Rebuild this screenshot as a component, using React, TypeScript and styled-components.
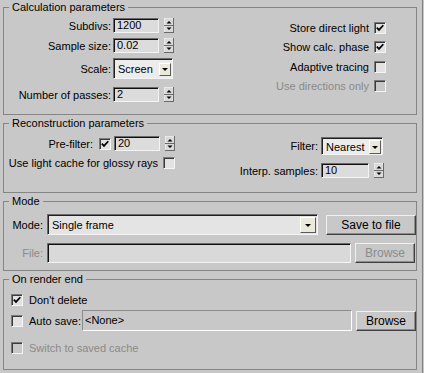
import React from "react";
import styled, { createGlobalStyle } from "styled-components";

const GlobalStyle = createGlobalStyle`
  html, body { margin: 0; padding: 0; background: #c8c8c8; }
  body {
    font-family: "Liberation Sans", Arial, sans-serif;
    font-size: 11px;
    color: #000;
  }
`;

const Panel = styled.div`
  box-sizing: border-box;
  width: 423px;
  height: 373px;
  padding: 1px 0 0 3px;
  border-right: 1px solid #808080;
  display: flex;
  flex-direction: column;
  gap: 2px;
  background: #c8c8c8;
`;

const Group = styled.fieldset<{ $h: number }>`
  box-sizing: border-box;
  width: 414px;
  height: ${(p) => p.$h}px;
  margin: 0;
  padding: 0;
  min-width: 0;
  border: 1px solid #858585;
`;

const Legend = styled.legend`
  margin-left: 5px;
  padding: 0 3px;
  line-height: 13px;
  font-size: 11px;
`;

const Split = styled.div`
  display: flex;
  justify-content: space-between;
  align-items: flex-start;
`;

const Col = styled.div<{ $pt: number; $pr?: number; $w?: number; $end?: boolean }>`
  display: flex;
  flex-direction: column;
  align-items: ${(p) => (p.$end ? "flex-end" : "stretch")};
  padding-top: ${(p) => p.$pt}px;
  padding-right: ${(p) => p.$pr ?? 0}px;
  ${(p) => (p.$w ? `width: ${p.$w}px;` : "")}
`;

const Row = styled.div<{ $h: number; $mt?: number; $gap?: number; $pl?: number }>`
  display: flex;
  align-items: center;
  height: ${(p) => p.$h}px;
  margin-top: ${(p) => p.$mt ?? 0}px;
  padding-left: ${(p) => p.$pl ?? 0}px;
  gap: ${(p) => p.$gap ?? 0}px;
`;

const Label = styled.span<{ $w?: number; $off?: boolean; $mr?: number; $ml?: number; $left?: boolean }>`
  ${(p) => (p.$w ? `width: ${p.$w}px;` : "")}
  text-align: ${(p) => (p.$left ? "left" : "right")};
  margin-right: ${(p) => p.$mr ?? 0}px;
  margin-left: ${(p) => p.$ml ?? 0}px;
  color: ${(p) => (p.$off ? "#8a8a8a" : "#000")};
  white-space: nowrap;
  flex-shrink: 0;
`;

const Field = styled.div<{ $w: number; $h?: number }>`
  box-sizing: border-box;
  width: ${(p) => p.$w}px;
  height: ${(p) => p.$h ?? 15}px;
  background: #dcdcdc;
  border: 1px solid;
  border-color: #6a6a6a #f4f4f4 #f4f4f4 #6a6a6a;
  box-shadow: inset 1px 1px #101010;
  padding-left: 3px;
  line-height: ${(p) => (p.$h ?? 15) - 2}px;
  flex-shrink: 0;
`;

const FileBox = styled.div<{ $w: number; $h: number; $static?: boolean }>`
  box-sizing: border-box;
  width: ${(p) => p.$w}px;
  height: ${(p) => p.$h}px;
  background: ${(p) => (p.$static ? "#c8c8c8" : "#d9d9d9")};
  border: 1px solid;
  border-color: ${(p) =>
    p.$static ? "#8c8c8c #ffffff #ffffff #8c8c8c" : "#6a6a6a #f4f4f4 #f4f4f4 #6a6a6a"};
  box-shadow: ${(p) => (p.$static ? "none" : "inset 1px 1px #101010")};
  padding-left: 2px;
  line-height: ${(p) => p.$h - 2}px;
  flex-shrink: 0;
`;

const SpinBox = styled.svg`
  flex-shrink: 0;
  display: block;
`;

const Select = styled.div<{ $w: number; $h: number; $bg: string }>`
  box-sizing: border-box;
  width: ${(p) => p.$w}px;
  height: ${(p) => p.$h}px;
  display: flex;
  align-items: center;
  justify-content: space-between;
  background: ${(p) => p.$bg};
  border: 1px solid;
  border-color: #6a6a6a #f4f4f4 #f4f4f4 #6a6a6a;
  box-shadow: inset 1px 1px #202020;
  padding: 1px 1px 0 4px;
  flex-shrink: 0;
`;

const ArrowBtn = styled.span<{ $w: number; $h: number }>`
  box-sizing: border-box;
  width: ${(p) => p.$w}px;
  height: ${(p) => p.$h}px;
  display: flex;
  align-items: center;
  justify-content: center;
  background: #ebe8dc;
  border: 1px solid;
  border-color: #ffffff #5a5a5a #5a5a5a #ffffff;
  &::after {
    content: "";
    border-left: 3px solid transparent;
    border-right: 3px solid transparent;
    border-top: 3px solid #000;
    margin-top: 1px;
  }
`;

const Button = styled.div<{ $w: number; $h: number; $off?: boolean }>`
  box-sizing: border-box;
  width: ${(p) => p.$w}px;
  height: ${(p) => p.$h}px;
  display: flex;
  align-items: center;
  justify-content: center;
  background: #c8c8c8;
  border: 1px solid;
  border-color: #f0f0f0 #404040 #404040 #f0f0f0;
  box-shadow: inset -1px -1px #8c8c8c;
  color: ${(p) => (p.$off ? "#8c8c8c" : "#000")};
  font-size: 12px;
  flex-shrink: 0;
`;

const Box = styled.span<{ $off?: boolean }>`
  box-sizing: border-box;
  width: 12px;
  height: 12px;
  display: flex;
  align-items: center;
  justify-content: center;
  background: ${(p) => (p.$off ? "#c8c8c8" : "#e2e2e2")};
  border: 1px solid;
  border-color: #7a7a7a #f4f4f4 #f4f4f4 #7a7a7a;
  box-shadow: inset 1px 1px #3a3a3a;
  flex-shrink: 0;
`;

const CheckGrid = styled.div`
  display: grid;
  grid-template-columns: auto 12px;
  grid-auto-rows: 13px;
  row-gap: 6.5px;
  column-gap: 5px;
  align-items: center;
  justify-items: end;
`;

const FormGrid = styled.div`
  display: grid;
  grid-template-columns: auto 63px;
  column-gap: 3px;
  row-gap: 8px;
  align-items: center;
`;

const GridLabel = styled.span`
  justify-self: end;
  white-space: nowrap;
`;

const Mark = () => (
  <svg width="8" height="8" viewBox="0 0 8 8">
    <path d="M0.8 3.6 L3 5.9 L7.3 1.2" fill="none" stroke="#000" strokeWidth="1.7" />
  </svg>
);

const Check = ({ on, off }: { on?: boolean; off?: boolean }) => (
  <Box $off={off}>{on ? <Mark /> : null}</Box>
);

const Spinner = () => (
  <SpinBox width="10" height="15" viewBox="0 0 10 15">
    <rect x="0" y="0" width="10" height="15" fill="#dadada" />
    <path d="M0 0H10M0 0V15" stroke="#f6f6f6" strokeWidth="1" />
    <path d="M0 14.5H10M9.5 0V15M0 7.5H10" stroke="#6a6a6a" strokeWidth="1" />
    <path d="M2.5 5.5 L5 3 L7.5 5.5 Z" fill="#000" />
    <path d="M2.5 9.5 L5 12 L7.5 9.5 Z" fill="#000" />
  </SpinBox>
);

const Spin = ({ value, w = 46 }: { value: string; w?: number }) => (
  <Row $h={15} $gap={5}>
    <Field $w={w}>{value}</Field>
    <Spinner />
  </Row>
);

export default function App() {
  return (
    <>
      <GlobalStyle />
      <Panel>
        <Group $h={114}>
          <Legend>Calculation parameters</Legend>
          <Split>
            <Col $pt={4}>
              <Row $h={15}>
                <Label $w={107} $mr={2}>Subdivs:</Label>
                <Spin value="1200" />
              </Row>
              <Row $h={15} $mt={5}>
                <Label $w={107} $mr={2}>Sample size:</Label>
                <Spin value="0.02" />
              </Row>
              <Row $h={21} $mt={5}>
                <Label $w={107} $mr={2}>Scale:</Label>
                <Select $w={60} $h={21} $bg="#ececec">
                  Screen
                  <ArrowBtn $w={12} $h={13} />
                </Select>
              </Row>
              <Row $h={15} $mt={8}>
                <Label $w={107} $mr={2}>Number of passes:</Label>
                <Spin value="2" />
              </Row>
            </Col>
            <Col $pt={7} $pr={30}>
              <CheckGrid>
                <span>Store direct light</span>
                <Check on />
                <span>Show calc. phase</span>
                <Check on />
                <span>Adaptive tracing</span>
                <Check />
                <Label $off>Use directions only</Label>
                <Check off />
              </CheckGrid>
            </Col>
          </Split>
        </Group>

        <Group $h={76}>
          <Legend>Reconstruction parameters</Legend>
          <Split>
            <Col $pt={6} $w={171} $end>
              <Row $h={15}>
                <Label $mr={6}>Pre-filter:</Label>
                <Check on />
                <Row $h={15} $pl={3}>
                  <Spin value="20" />
                </Row>
              </Row>
              <Row $h={12} $mt={6}>
                <Label $mr={5}>Use light cache for glossy rays</Label>
                <Check />
              </Row>
            </Col>
            <Col $pt={7} $pr={32}>
              <FormGrid>
                <GridLabel>Filter:</GridLabel>
                <Select $w={62} $h={18} $bg="#ececec">
                  Nearest
                  <ArrowBtn $w={12} $h={14} />
                </Select>
                <GridLabel>Interp. samples:</GridLabel>
                <Spin value="10" w={48} />
              </FormGrid>
            </Col>
          </Split>
        </Group>

        <Group $h={76}>
          <Legend>Mode</Legend>
          <Col $pt={6}>
            <Row $h={21}>
              <Label $w={39} $mr={4}>Mode:</Label>
              <Select $w={271} $h={21} $bg="#e4e4e4">
                Single frame
                <ArrowBtn $w={16} $h={16} />
              </Select>
              <Row $h={21} $pl={8}>
                <Button $w={90} $h={20}>Save to file</Button>
              </Row>
            </Row>
            <Row $h={20} $mt={8}>
              <Label $w={39} $mr={4} $off>File:</Label>
              <FileBox $w={304} $h={20} />
              <Row $h={20} $pl={4}>
                <Button $w={60} $h={20} $off>Browse</Button>
              </Row>
            </Row>
          </Col>
        </Group>

        <Group $h={97}>
          <Legend>On render end</Legend>
          <Col $pt={7}>
            <Row $h={13} $pl={7}>
              <Check on />
              <Label $ml={6}>Don't delete</Label>
            </Row>
            <Row $h={21} $mt={4} $pl={7}>
              <Check />
              <Label $w={53} $ml={6} $left>Auto save:</Label>
              <FileBox $w={270} $h={21} $static>&lt;None&gt;</FileBox>
              <Row $h={21} $pl={4}>
                <Button $w={60} $h={20}>Browse</Button>
              </Row>
            </Row>
            <Row $h={13} $mt={10} $pl={7}>
              <Check off />
              <Label $off $ml={6}>Switch to saved cache</Label>
            </Row>
          </Col>
        </Group>
      </Panel>
    </>
  );
}
